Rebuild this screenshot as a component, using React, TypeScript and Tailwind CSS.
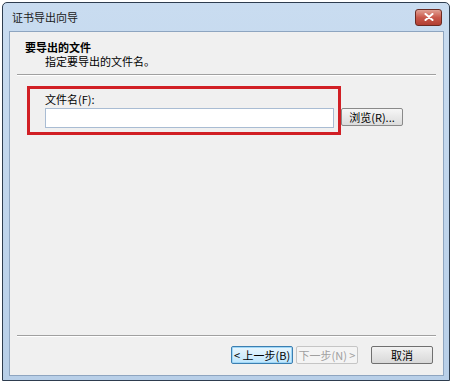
import React from "react";

const cjk = { fontFamily: '"Noto Sans CJK SC", "Noto Sans", sans-serif' };

export default function App() {
  return (
    <div className="w-[451px] h-[382px] bg-white pt-[2px] pl-[2px] pr-[1px] pb-[1px]" style={cjk}>
      <div className="w-full h-full flex flex-col border border-[#2e3d4f] rounded-t-[5px] bg-gradient-to-b from-[#c9dcf0] to-[#b8cfe8]">
        {/* Title bar */}
        <div className="h-[28px] flex items-center justify-between pl-[9px] pr-[7px] shrink-0">
          <span className="text-[11px] text-[#1a1a1a] leading-none">证书导出向导</span>
          <div className="w-[27px] h-[17px] rounded-[3px] border border-[#6b2a22] bg-gradient-to-b from-[#e0a094] via-[#c9584b] to-[#b13f33] flex items-center justify-center">
            <svg width="10" height="8" viewBox="0 0 10 8">
              <path d="M1.5 1 L8.5 7 M8.5 1 L1.5 7" stroke="white" strokeWidth="2" strokeLinecap="round" />
            </svg>
          </div>
        </div>
        {/* Content */}
        <div className="flex-1 ml-[6px] mr-[5px] mb-[4px] bg-[#f0f0f0] border border-[#8ea5c0] flex flex-col">
          <div className="pt-[8px] pl-[15px]">
            <div className="text-[11px] font-bold leading-[14px] text-black">要导出的文件</div>
            <div className="text-[11px] leading-[14px] pl-[20px] text-black">指定要导出的文件名。</div>
          </div>
          <div className="mx-[7px] mt-[6px] border-t border-[#a0a0a0] border-b border-b-white" />
          <div className="flex items-start mt-[10px] ml-[17px]">
            <div className="w-[314px] h-[49px] border-[3px] border-[#d11f25] pl-[15px] pt-[3px]">
              <div className="text-[11px] leading-[14px] text-black">文件名(F):</div>
              <div className="mt-[2px] w-[289px] h-[20px] bg-white border border-[#a9bcd3]" />
            </div>
            <button className="mt-[22px] w-[62px] h-[18px] border border-[#8a8a8a] rounded-[2px] bg-gradient-to-b from-[#f6f6f6] to-[#dcdcdc] text-[11px] leading-none text-black flex items-center justify-center">
              浏览(R)...
            </button>
          </div>
          <div className="mt-auto mx-[7px] border-t border-[#a0a0a0] border-b border-b-white" />
          <div className="flex justify-end items-center pr-[10px] pt-[9px] pb-[11px]">
            <button className="w-[62px] h-[18px] border border-[#3c7fb1] rounded-[2px] bg-gradient-to-b from-[#eaf6fd] to-[#bee6fd] shadow-[inset_0_0_0_1px_#9fd7f7] text-[11px] leading-none text-black flex items-center justify-center">
              &lt; 上一步(B)
            </button>
            <button className="ml-[3px] w-[62px] h-[18px] border border-[#c5c5c5] rounded-[2px] bg-[#f4f4f4] text-[11px] leading-none text-[#a0a0a0] flex items-center justify-center">
              下一步(N) &gt;
            </button>
            <button className="ml-[13px] w-[62px] h-[18px] border border-[#707070] rounded-[2px] bg-gradient-to-b from-[#f2f2f2] to-[#d8d8d8] text-[11px] leading-none text-black flex items-center justify-center">
              取消
            </button>
          </div>
        </div>
      </div>
    </div>
  );
}
